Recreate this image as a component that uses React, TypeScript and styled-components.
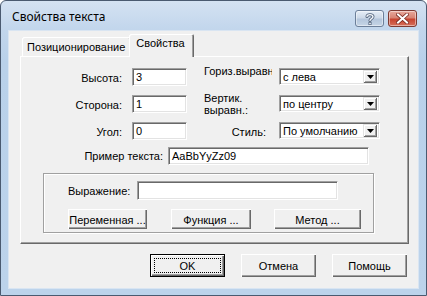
import React from 'react';
import styled, { createGlobalStyle } from 'styled-components';

const Global = createGlobalStyle`
  html, body { margin: 0; padding: 0; background: #ffffff; }
  body { font-family: "Liberation Sans", Arial, sans-serif; font-size: 11px; color: #000; }
  * { box-sizing: border-box; }
`;

const Window = styled.div`
  width: 427px;
  height: 296px;
  border: 1px solid #4a5a70;
  border-radius: 6px 6px 0 0;
  background: linear-gradient(#d4e2f2 0px, #c2d6ec 28px, #b9d1ea 60px, #bcd3eb 100%);
  display: flex;
  flex-direction: column;
  overflow: hidden;
`;

const TitleBar = styled.div`
  height: 29px;
  display: flex;
  align-items: center;
  padding: 0 9px 0 11px;
`;

const Title = styled.div`
  flex: 1;
  font-family: "Noto Sans", "Open Sans", sans-serif;
  font-size: 12px;
  color: #000;
  padding-top: 1px;
`;

const CaptionButtons = styled.div`
  display: flex;
  gap: 4px;
  align-self: flex-start;
  margin-top: 9px;
`;

const CaptionButton = styled.div<{ $close?: boolean }>`
  width: 29px;
  height: 17px;
  border-radius: 3px;
  border: 1px solid ${p => (p.$close ? '#7d3a32' : '#6c7f99')};
  background: ${p =>
    p.$close
      ? 'linear-gradient(#e8a99c 0%, #d88474 45%, #c7432f 55%, #d6705c 100%)'
      : 'linear-gradient(#e6eef7 0%, #cdd9e8 45%, #b4c6dc 55%, #c6d5e6 100%)'};
  box-shadow: inset 0 0 0 1px rgba(255, 255, 255, 0.45);
  display: flex;
  align-items: center;
  justify-content: center;
`;

const Client = styled.div`
  flex: 1;
  margin: 0 7px 6px 7px;
  background: #f0f0f0;
  border: 1px solid #d9e5f2;
  display: flex;
  flex-direction: column;
  padding: 3px 10px 0 11px;
`;

const TabStrip = styled.div`
  height: 22px;
  display: flex;
  align-items: flex-end;
  padding-left: 2px;
  position: relative;
  z-index: 1;
`;

const Tab = styled.div<{ $active?: boolean }>`
  height: ${p => (p.$active ? '23px' : '19px')};
  margin: ${p => (p.$active ? '0 -2px -1px -2px' : '0')};
  padding: ${p => (p.$active ? '3px 9px 0 7px' : '4px 6px 0 5px')};
  background: #f0f0f0;
  border-radius: 2px 2px 0 0;
  box-shadow: inset 1px 1px #ffffff, inset -1px 0 #696969, inset -2px 0 #a0a0a0;
  position: relative;
  z-index: ${p => (p.$active ? 2 : 1)};
  white-space: nowrap;
`;

const Panel = styled.div`
  width: 389px;
  height: 188px;
  background: #f0f0f0;
  border-top: 1px solid #ffffff;
  border-left: 1px solid #ffffff;
  border-right: 1px solid #696969;
  border-bottom: 1px solid #696969;
  box-shadow: inset -1px -1px #a0a0a0;
  padding-top: 11px;
  display: flex;
  flex-direction: column;
`;

const FormGrid = styled.div`
  display: grid;
  grid-template-columns: 101px 55px 68px 101px;
  grid-template-rows: 18px 18px 18px;
  column-gap: 10px;
  row-gap: 9px;
  & > :nth-child(4n + 3) { margin-left: 7px; margin-right: -7px; }
`;

const Label = styled.div`
  display: flex;
  align-items: center;
  justify-content: flex-end;
  white-space: nowrap;
  padding-top: 1px;
`;

const SideLabel = styled.div`
  align-self: start;
  margin-top: -3px;
  line-height: 12px;
  height: 27px;
  overflow: hidden;
  text-align: left;
  word-break: keep-all;
`;

const StyleLabel = styled.div`
  display: flex;
  align-items: center;
  justify-content: flex-end;
  padding-right: 6px;
  padding-top: 1px;
`;

const Input = styled.div<{ $w?: number; $h?: number }>`
  width: ${p => (p.$w ? `${p.$w}px` : '100%')};
  height: ${p => (p.$h ? `${p.$h}px` : '18px')};
  background: #ffffff;
  border-top: 1px solid #a0a0a0;
  border-left: 1px solid #a0a0a0;
  border-right: 1px solid #ffffff;
  border-bottom: 1px solid #ffffff;
  box-shadow: inset 1px 1px #696969, inset -1px -1px #e3e3e3;
  padding: 0 3px;
  display: flex;
  align-items: center;
  white-space: nowrap;
  overflow: hidden;
`;

const SampleInput = styled(Input)`
  margin-left: 5px;
`;

const Combo = styled(Input)`
  height: 17px;
  margin-left: 4px;
  padding-right: 2px;
  justify-content: space-between;
`;

const DropButton = styled.div`
  width: 14px;
  height: 13px;
  background: #f0f0f0;
  box-shadow: inset 1px 1px #e3e3e3, inset -1px -1px #696969, inset 2px 2px #ffffff, inset -2px -2px #a0a0a0;
  display: flex;
  align-items: center;
  justify-content: center;
  flex-shrink: 0;
`;

const SampleRow = styled.div`
  display: flex;
  align-items: center;
  margin-top: 7px;
`;

const SampleLabel = styled.div`
  width: 142px;
  text-align: right;
  white-space: nowrap;
`;

const GroupBox = styled.div`
  margin: 8px 0 0 22px;
  width: 331px;
  height: 60px;
  border: 1px solid #a0a0a0;
  box-shadow: inset 1px 1px #ffffff, 1px 1px #ffffff;
  padding: 7px 0 0 24px;
  display: flex;
  flex-direction: column;
`;

const ExprRow = styled.div`
  display: flex;
  align-items: center;
`;

const ExprLabel = styled.div`
  width: 69px;
  white-space: nowrap;
  padding-top: 1px;
`;

const ButtonRow = styled.div`
  display: flex;
  margin-top: 9px;
`;

const Button = styled.div<{ $w: number; $gap?: number; $default?: boolean; $tall?: boolean }>`
  width: ${p => p.$w}px;
  height: ${p => (p.$tall ? '23px' : '20px')};
  margin-left: ${p => p.$gap ?? 0}px;
  background: #f0f0f0;
  box-shadow: ${p =>
    p.$default
      ? 'inset 0 0 0 1px #000000, inset 2px 2px #ffffff, inset -2px -2px #696969, inset -3px -3px #a0a0a0'
      : 'inset 1px 1px #ffffff, inset -1px -1px #696969, inset -2px -2px #a0a0a0'};
  display: flex;
  align-items: center;
  justify-content: center;
  white-space: nowrap;
  position: relative;
  padding-top: 1px;
`;

const Focus = styled.div`
  position: absolute;
  left: 4px;
  top: 4px;
  right: 4px;
  bottom: 4px;
  border: 1px dotted #000;
`;

const Footer = styled.div`
  display: flex;
  justify-content: flex-end;
  margin-top: 10px;
  padding-right: 1px;
`;

const Arrow = () => (
  <svg width="7" height="4" viewBox="0 0 7 4">
    <path d="M0 0 H7 L3.5 4 Z" fill="#000" />
  </svg>
);

export default function App() {
  return (
    <>
      <Global />
      <Window>
        <TitleBar>
          <Title>Свойства текста</Title>
          <CaptionButtons>
            <CaptionButton>
              <svg width="10" height="12" viewBox="0 0 10 12">
                <path d="M2 3.5 C2 1 8 1 8 3.8 C8 5.6 5 5.6 5 7.6" fill="none" stroke="#4d5f78" strokeWidth="3" strokeLinecap="round" />
                <path d="M2 3.5 C2 1 8 1 8 3.8 C8 5.6 5 5.6 5 7.6" fill="none" stroke="#f4f7fb" strokeWidth="1.4" strokeLinecap="round" />
                <rect x="3.5" y="9" width="3" height="3" fill="#4d5f78" />
                <rect x="4.2" y="9.7" width="1.6" height="1.6" fill="#f4f7fb" />
              </svg>
            </CaptionButton>
            <CaptionButton $close>
              <svg width="13" height="11" viewBox="0 0 13 11">
                <path d="M2 1.5 L11 9.5 M11 1.5 L2 9.5" stroke="#7a2b22" strokeWidth="3.6" strokeLinecap="square" />
                <path d="M2 1.5 L11 9.5 M11 1.5 L2 9.5" stroke="#ffffff" strokeWidth="2" strokeLinecap="square" />
              </svg>
            </CaptionButton>
          </CaptionButtons>
        </TitleBar>
        <Client>
          <TabStrip>
            <Tab>Позиционирование</Tab>
            <Tab $active>Свойства</Tab>
          </TabStrip>
          <Panel>
            <FormGrid>
              <Label>Высота:</Label>
              <Input>3</Input>
              <SideLabel>Гориз.выравн.:</SideLabel>
              <Combo>
                с лева
                <DropButton><Arrow /></DropButton>
              </Combo>

              <Label>Сторона:</Label>
              <Input>1</Input>
              <SideLabel>Вертик. выравн.:</SideLabel>
              <Combo>
                по центру
                <DropButton><Arrow /></DropButton>
              </Combo>

              <Label>Угол:</Label>
              <Input>0</Input>
              <StyleLabel>Стиль:</StyleLabel>
              <Combo>
                По умолчанию
                <DropButton><Arrow /></DropButton>
              </Combo>
            </FormGrid>
            <SampleRow>
              <SampleLabel>Пример текста:</SampleLabel>
              <SampleInput $w={201}>AaBbYyZz09</SampleInput>
            </SampleRow>
            <GroupBox>
              <ExprRow>
                <ExprLabel>Выражение:</ExprLabel>
                <Input $w={201} $h={19} />
              </ExprRow>
              <ButtonRow>
                <Button $w={79}>Переменная ...</Button>
                <Button $w={80} $gap={24}>Функция ...</Button>
                <Button $w={87} $gap={23}>Метод ...</Button>
              </ButtonRow>
            </GroupBox>
          </Panel>
          <Footer>
            <Button $w={75} $default $tall>
              OK
              <Focus />
            </Button>
            <Button $w={75} $gap={16} $tall>Отмена</Button>
            <Button $w={75} $gap={16} $tall>Помощь</Button>
          </Footer>
        </Client>
      </Window>
    </>
  );
}
